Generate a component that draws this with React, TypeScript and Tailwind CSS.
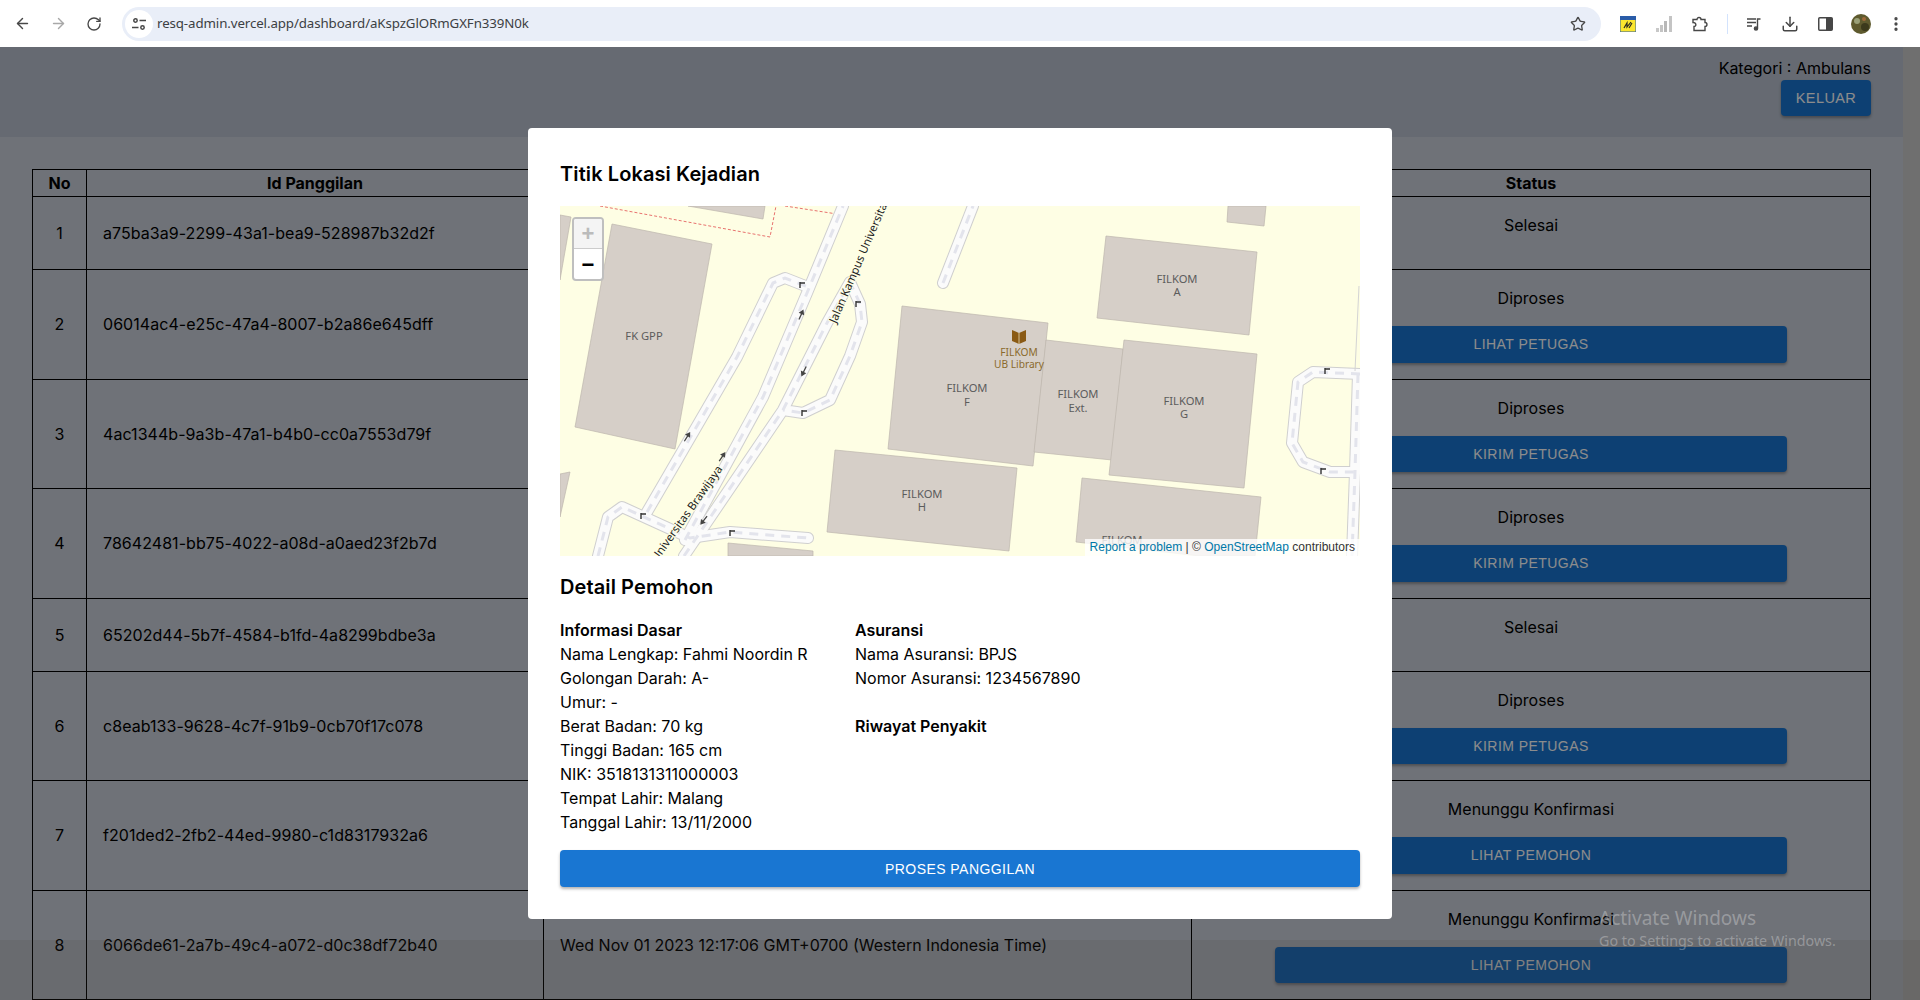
import React from 'react';
import { ArrowLeft, ArrowRight, RotateCw, Star, Download, EllipsisVertical } from 'lucide-react';

type Row = { no: number; id: string; time?: string; status: string; action?: string };

const rows: Row[] = [
    { no: 1, id: 'a75ba3a9-2299-43a1-bea9-528987b32d2f', status: 'Selesai' },
    { no: 2, id: '06014ac4-e25c-47a4-8007-b2a86e645dff', status: 'Diproses', action: 'Lihat Petugas' },
    { no: 3, id: '4ac1344b-9a3b-47a1-b4b0-cc0a7553d79f', status: 'Diproses', action: 'Kirim Petugas' },
    { no: 4, id: '78642481-bb75-4022-a08d-a0aed23f2b7d', status: 'Diproses', action: 'Kirim Petugas' },
    { no: 5, id: '65202d44-5b7f-4584-b1fd-4a8299bdbe3a', status: 'Selesai' },
    { no: 6, id: 'c8eab133-9628-4c7f-91b9-0cb70f17c078', status: 'Diproses', action: 'Kirim Petugas' },
    { no: 7, id: 'f201ded2-2fb2-44ed-9980-c1d8317932a6', status: 'Menunggu Konfirmasi', action: 'Lihat Pemohon' },
    {
        no: 8,
        id: '6066de61-2a7b-49c4-a072-d0c38df72b40',
        time: 'Wed Nov 01 2023 12:17:06 GMT+0700 (Western Indonesia Time)',
        status: 'Menunggu Konfirmasi',
        action: 'Lihat Pemohon',
    },
];

const buildings = [
    '52,18 152,38 115,243 15,221',
    '0,9 11,11 0,74',
    '128,0 205,0 203,13',
    '0,268 10,266 0,311',
    '275,244 457,262 449,345 267,326',
    '342,100 488,117 473,260 328,243',
    '486,134 563,143 552,254 474,246',
    '564,134 697,148 684,282 549,269',
    '546,30 697,46 689,129 537,112',
    '668,0 706,0 704,20 667,16',
    '522,272 701,291 695,350 640,350 516,336',
    '168,337 253,345 253,350 168,350',
];

const roads = [
    'M87,306 L177,151 L213,77 L225,72 L248,81',
    'M125,334 L203,191 L247,87 L283,0',
    'M124,350 L223,204 L267,117 L290,76 L300,98 L302,116 L290,150 L270,194 L243,207 L223,204',
    'M38,350 L48,311 L62,301 L130,332 L170,326 L248,332',
    'M383,77 L413,0',
    'M800,168 L753,166 L738,176 L732,237 L743,256 L770,266 L795,266',
    'M798,168 L795,266 L792,350',
];

const arrows = [
    { x: 127, y: 231, a: -58 },
    { x: 241, y: 109, a: -66 },
    { x: 162, y: 251, a: -56 },
    { x: 244, y: 165, a: 116 },
    { x: 144, y: 314, a: 128 },
];

const turns = [
    [242, 79], [298, 98], [244, 207], [83, 310], [172, 327], [767, 165], [763, 265],
];

const labels: [string, number, number][] = [
    ['FK GPP', 84, 134],
    ['FILKOM', 362, 292],
    ['H', 362, 305],
    ['FILKOM', 407, 186],
    ['F', 407, 200],
    ['FILKOM', 518, 192],
    ['Ext.', 518, 206],
    ['FILKOM', 624, 199],
    ['G', 624, 212],
    ['FILKOM', 617, 77],
    ['A', 617, 90],
    ['FILKOM', 562, 338],
];

const MapDrawing: React.FC = () => (
    <svg viewBox="0 0 800 350" className="block w-full h-full" fontFamily="'Noto Sans', sans-serif">
        <rect width="800" height="350" fill="#fefee4" />
        <path d="M40,0 L210,31 L216,0 M225,0 L277,8" fill="none" stroke="#e8736f" strokeWidth="1" strokeDasharray="3 2" />
        {buildings.map(points => (
            <polygon key={points} points={points} fill="#d6cfc8" stroke="#bdb6ae" strokeWidth="0.7" />
        ))}
        {roads.map(d => <path key={`c${d}`} d={d} fill="none" stroke="#cfcfcf" strokeWidth="12" strokeLinejoin="round" strokeLinecap="round" />)}
        {roads.map(d => <path key={`w${d}`} d={d} fill="none" stroke="#fbfbfb" strokeWidth="10" strokeLinejoin="round" strokeLinecap="round" />)}
        {roads.map(d => <path key={`d${d}`} d={d} fill="none" stroke="#e3e4ec" strokeWidth="3" strokeDasharray="9 7" />)}
        <path d="M799,80 L795,165" fill="none" stroke="#d4d4d4" strokeWidth="1" />
        {arrows.map(({ x, y, a }) => (
            <g key={`${x}-${y}`} transform={`translate(${x} ${y}) rotate(${a})`}>
                <path d="M-5,0 H2" stroke="#444" strokeWidth="1.3" />
                <path d="M6,0 L1,-3 V3 Z" fill="#444" />
            </g>
        ))}
        {turns.map(([x, y]) => (
            <path key={`${x}-${y}`} d={`M${x - 2},${y - 3} V${y + 3} M${x - 2},${y - 2} H${x + 3}`} stroke="#333" strokeWidth="1.4" fill="none" />
        ))}
        {labels.map(([text, x, y]) => (
            <text key={`${text}${x}${y}`} x={x} y={y} textAnchor="middle" fontSize="11.2" fill="#5c5c5c">{text}</text>
        ))}
        <text x="459" y="150" textAnchor="middle" fontSize="10.2" fill="#8a6a2c">FILKOM</text>
        <text x="459" y="162" textAnchor="middle" fontSize="10.2" fill="#8a6a2c">UB Library</text>
        <path d="M452,124 L459,127 L466,124 V135 L459,138 L452,135 Z" fill="#8a5a14" />
        <path d="M459,127 V138" stroke="#e8dcb8" strokeWidth="0.8" />
        <text transform="translate(276 118) rotate(-66.7)" fontSize="11.4" fill="#222" stroke="#fefee4" strokeWidth="2" paintOrder="stroke">Jalan Kampus Universitas</text>
        <text transform="translate(163 263) rotate(-54.7)" textAnchor="end" fontSize="11.4" fill="#222" stroke="#fefee4" strokeWidth="2" paintOrder="stroke">Jalan Universitas Brawijaya</text>
    </svg>
);

const BrowserBar: React.FC = () => (
    <div className="h-[47px] bg-white flex items-center text-[#474747] font-['Noto_Sans',sans-serif]">
        <div className="w-[122px] flex items-center pl-[14px] gap-[19px]">
            <ArrowLeft size={17} strokeWidth={2} />
            <ArrowRight size={17} strokeWidth={2} className="text-[#a8a8a8]" />
            <RotateCw size={16} strokeWidth={2} />
        </div>
        <div className="w-[1479px] h-[34px] rounded-full bg-[#e9eef8] flex items-center pl-[3px] pr-[15px]">
            <div className="w-[28px] h-[28px] rounded-full bg-white flex items-center justify-center">
                <svg width="16" height="16" viewBox="0 0 16 16" fill="none" stroke="#474747" strokeWidth="1.5">
                    <circle cx="4.5" cy="4.5" r="1.7" />
                    <path d="M8.5 4.5H15M1 11.5H7.5" />
                    <circle cx="11.5" cy="11.5" r="1.7" />
                </svg>
            </div>
            <span className="ml-[4px] text-[13.3px] text-[#3c4043] tracking-[-0.1px]">resq-admin.vercel.app/dashboard/aKspzGlORmGXFn339N0k</span>
            <Star size={16} strokeWidth={2} className="ml-auto" />
        </div>
        <div className="flex-1 flex items-center pl-[19px]">
            <svg width="16" height="16" viewBox="0 0 16 16">
                <rect width="16" height="16" fill="#fbe62e" stroke="#2a5ca8" strokeWidth="1" />
                <rect width="16" height="4" fill="#2a5ca8" />
                <path d="M4 12 L7 7 L7 11 L11 6 M9 12 L12 7" stroke="#2b2b20" strokeWidth="1.2" fill="none" />
            </svg>
            <svg width="16" height="16" viewBox="0 0 16 16" className="ml-[20px]">
                <rect x="0" y="12" width="3" height="4" fill="#c8c8c8" />
                <rect x="4" y="9" width="3" height="7" fill="#c4c4c4" />
                <rect x="8" y="5" width="3" height="11" fill="#b8b8b8" />
                <rect x="13" y="0" width="3" height="16" fill="#c4c4c4" />
            </svg>
            <svg width="16" height="16" viewBox="0 0 16 16" fill="none" stroke="#474747" strokeWidth="1.4" className="ml-[20px]">
                <path d="M1 3.5H5C5 0.8 9 0.8 9 3.5H13V6.5C15.6 6.5 15.6 10.5 13 10.5V14.5H2V10.5C4.6 10.5 4.6 6.5 1 6.5Z" />
            </svg>
            <div className="w-px h-[20px] bg-[#d3e3fd] ml-[19px]" />
            <svg width="16" height="16" viewBox="0 0 16 16" fill="none" stroke="#474747" strokeWidth="1.4" className="ml-[18px]">
                <path d="M1 3H10M1 6.5H10M1 10H6M14.5 3H11.5V12" />
                <circle cx="10" cy="12.5" r="1.6" fill="#474747" />
            </svg>
            <Download size={18} strokeWidth={2} className="ml-[19px]" />
            <svg width="15" height="14" viewBox="0 0 15 14" className="ml-[19px]">
                <rect x="0.75" y="0.75" width="13.5" height="12.5" rx="1" fill="none" stroke="#474747" strokeWidth="1.5" />
                <rect x="8" y="1" width="6" height="12" fill="#474747" />
            </svg>
            <svg width="20" height="20" viewBox="0 0 20 20" className="ml-[18px]">
                <circle cx="10" cy="10" r="10" fill="#5e5a2e" />
                <circle cx="6" cy="7" r="3" fill="#9aa078" />
                <circle cx="14" cy="13" r="4" fill="#3c3a1c" />
                <circle cx="13" cy="5" r="2" fill="#a06a3a" />
            </svg>
            <EllipsisVertical size={18} strokeWidth={2.4} className="ml-[16px]" />
        </div>
    </div>
);

const ActionButton: React.FC<{ label: string }> = ({ label }) => (
    <button className="w-[512px] h-[36.5px] rounded bg-[#1976d2] text-white font-['Liberation_Sans',sans-serif] text-sm tracking-[0.45px] uppercase shadow-[0_2px_3px_rgba(0,0,0,0.3)]">
        {label}
    </button>
);

const CallTable: React.FC = () => (
    <table className="table-fixed w-full border-collapse border border-black">
        <thead>
            <tr className="h-[27px] leading-6">
                <th className="w-[54px] border border-black font-bold">No</th>
                <th className="w-[457px] border border-black font-bold">Id Panggilan</th>
                <th className="w-[648px] border border-black font-bold">Waktu Panggilan</th>
                <th className="border border-black font-bold">Status</th>
            </tr>
        </thead>
        <tbody>
            {rows.map(row => (
                <tr key={row.no}>
                    <td className="border border-black text-center">{row.no}</td>
                    <td className="border border-black px-4 tracking-[0.05px]">{row.id}</td>
                    <td className="border border-black px-4">{row.time}</td>
                    <td className="border border-black p-4 text-center">
                        <p className="mb-4">{row.status}</p>
                        {row.action && <ActionButton label={row.action} />}
                    </td>
                </tr>
            ))}
        </tbody>
    </table>
);

const DetailModal: React.FC = () => (
    <div className="w-[864px] h-[791px] bg-white rounded-sm p-8 text-black">
        <h2 className="text-xl font-semibold leading-7 mb-[18px] tracking-[0.1px]">Titik Lokasi Kejadian</h2>
        <div className="relative h-[350px] overflow-hidden">
            <MapDrawing />
            <div className="absolute left-[12px] top-[11px] w-[32px] rounded border-2 border-[#bfbfbf] bg-white overflow-hidden">
                <div className="h-[30px] bg-[#f4f4f4] border-b border-[#ccc] flex items-center justify-center text-[22px] font-bold text-[#bbb] font-['Liberation_Sans',sans-serif]">+</div>
                <div className="h-[30px] flex items-center justify-center text-[22px] font-bold text-black font-['Liberation_Sans',sans-serif]">−</div>
            </div>
            <div className="absolute right-0 bottom-0 h-[17px] px-[5px] bg-white/80 text-xs leading-[17px] text-[#333] font-['Liberation_Sans',sans-serif]">
                <span className="text-[#0078a8]">Report a problem</span> | © <span className="text-[#0078a8]">OpenStreetMap</span> contributors
            </div>
        </div>
        <h2 className="text-xl font-semibold leading-7 mt-[17px] tracking-[0.1px]">Detail Pemohon</h2>
        <div className="flex mt-[17px] leading-6">
            <div className="w-[295px]">
                <p className="font-semibold">Informasi Dasar</p>
                <p>Nama Lengkap: Fahmi Noordin R</p>
                <p>Golongan Darah: A-</p>
                <p>Umur: -</p>
                <p>Berat Badan: 70 kg</p>
                <p>Tinggi Badan: 165 cm</p>
                <p>NIK: 3518131311000003</p>
                <p>Tempat Lahir: Malang</p>
                <p>Tanggal Lahir: 13/11/2000</p>
            </div>
            <div>
                <p className="font-semibold">Asuransi</p>
                <p>Nama Asuransi: BPJS</p>
                <p className="mb-6">Nomor Asuransi: 1234567890</p>
                <p className="font-semibold">Riwayat Penyakit</p>
            </div>
        </div>
        <button className="w-full h-[37px] mt-4 rounded bg-[#1976d2] text-white font-['Liberation_Sans',sans-serif] text-sm tracking-[0.45px] uppercase shadow-[0_2px_3px_rgba(0,0,0,0.3)]">
            Proses Panggilan
        </button>
    </div>
);

const App: React.FC = () => (
    <div className="h-[1000px] overflow-hidden font-['Inter',sans-serif] text-black">
        <BrowserBar />
        <div className="relative h-[953px] overflow-hidden flex">
            <div className="flex-1 bg-[#cbd0da]">
                <header className="h-[90px] bg-[#bac2d0] flex flex-col items-end px-8 pt-[9px] leading-6">
                    <p>Kategori : Ambulans</p>
                    <button className="w-[90px] h-[36px] rounded bg-[#1976d2] text-white font-['Liberation_Sans',sans-serif] text-[14.5px] tracking-[0.4px] uppercase shadow-[0_2px_3px_rgba(0,0,0,0.3)]">
                        Keluar
                    </button>
                </header>
                <main className="p-8">
                    <CallTable />
                </main>
            </div>
            <div className="w-[17px] bg-[#cacaca]" />
            <div className="absolute inset-0 bg-black/45" />
            <div className="absolute inset-x-0 bottom-0 h-[60px] bg-[#403a30]/12" />
            <div className="absolute inset-0 flex items-center justify-center">
                <DetailModal />
            </div>
            <div className="absolute left-[1599px] top-[858px] text-white/30 font-['Noto_Sans',sans-serif]">
                <p className="text-[19px] leading-[26px]">Activate Windows</p>
                <p className="text-[14.3px] leading-[20px]">Go to Settings to activate Windows.</p>
            </div>
        </div>
    </div>
);

export default App;
